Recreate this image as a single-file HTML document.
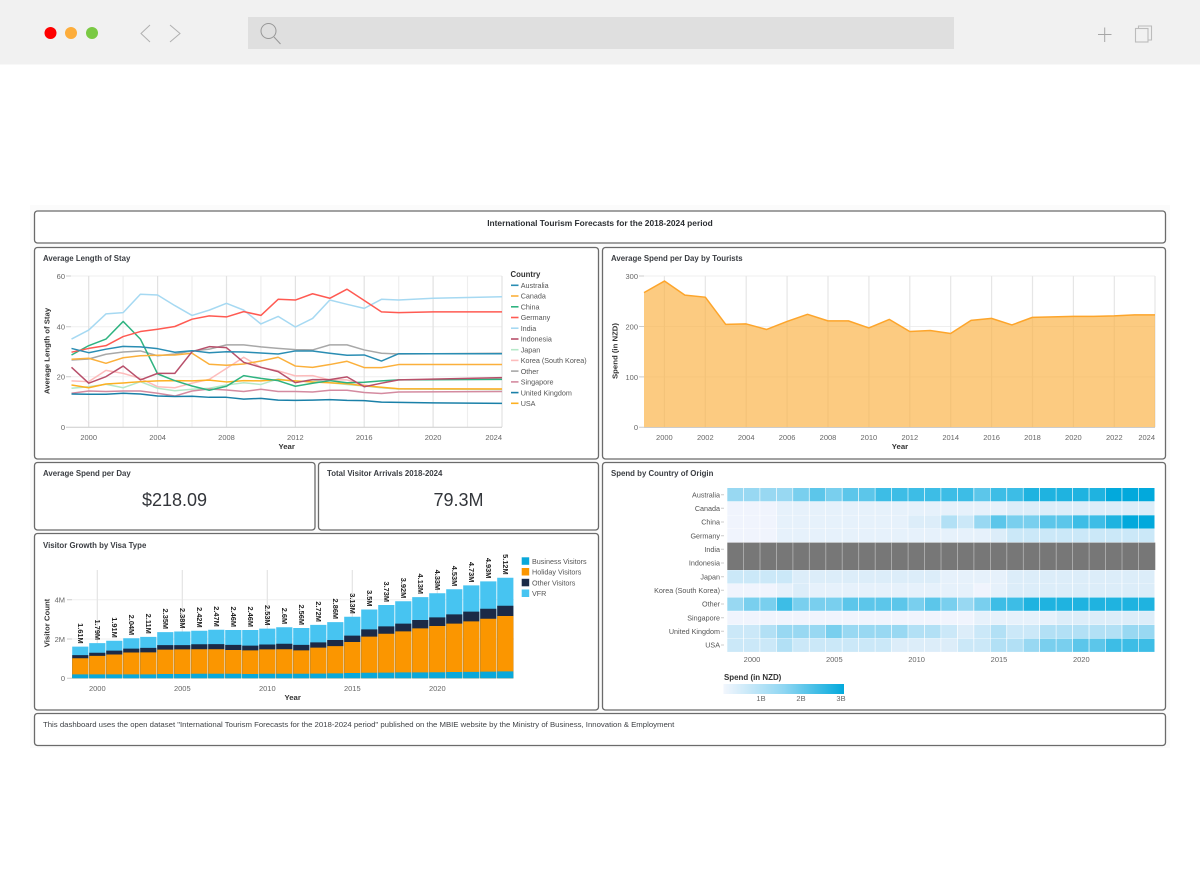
<!DOCTYPE html>
<html lang="en"><head><meta charset="utf-8"><title>International Tourism Forecasts</title>
<style>
html,body{margin:0;padding:0;background:#fff;width:1200px;height:878px;overflow:hidden}
svg{display:block;font-family:"Liberation Sans",sans-serif;filter:blur(.35px)}
.p{fill:#fff;stroke:#6b6b6b;stroke-width:1.3}
.t{font-size:7.85px;font-weight:bold;fill:#3a3d42}
.k{font-size:7.5px;fill:#666}
.e{text-anchor:end}
.m{text-anchor:middle}
.b{font-size:7.75px;font-weight:bold;fill:#333}
.l{font-size:7.2px;fill:#555}
.ln polyline{fill:none;stroke-width:1.5;vector-effect:non-scaling-stroke;stroke-linejoin:round}
.v{font-size:7.4px;font-weight:bold;fill:#222;text-anchor:end;dominant-baseline:central}
.hm rect{width:15.8px;height:13.3px}
.h0{fill:#f0f4fd}.h1{fill:#e6f1fb}.h2{fill:#dcedf9}.h3{fill:#cbe8f8}.h4{fill:#b2e0f5}.h5{fill:#98d8f2}.h6{fill:#79cfee}.h7{fill:#5cc6ea}.h8{fill:#3dbde6}.h9{fill:#1fb3e0}.ha{fill:#02a9dc}
</style></head><body>
<svg width="1200" height="878" viewBox="0 0 1200 878" xmlns="http://www.w3.org/2000/svg">
<defs><linearGradient id="g"><stop offset="0" stop-color="#f2f6fd"/><stop offset=".5" stop-color="#8fd6f2"/><stop offset="1" stop-color="#02a9dc"/></linearGradient></defs>
<rect width="1200" height="64.5" fill="#f1f1f1"/>
<circle cx="50.500" cy="33" r="6" fill="#fe0000"/><circle cx="71" cy="33" r="6" fill="#fdad3b"/><circle cx="92" cy="33" r="6" fill="#7ac943"/>
<path d="M150 25l-9 8.500 9 8.500M170 25l10 8.500-10 8.500" fill="none" stroke="#b0b0b0" stroke-width="1"/>
<rect x="248" y="17" width="706" height="32" fill="#dfdfdf"/>
<circle cx="268.500" cy="31" r="7.500" fill="none" stroke="#979797" stroke-width="1"/><path d="M274 37l6.500 7" stroke="#979797" stroke-width="1"/>
<path d="M1098 34.500h13.500M1104.700 27.500v14.500" stroke="#a6a6a6" stroke-width="1"/>
<path d="M1138.500 28v-2h13v14h-3" fill="none" stroke="#bcbcbc" stroke-width="1.100"/><rect x="1135.500" y="28.500" width="12.500" height="13.500" fill="#f1f1f1" stroke="#bcbcbc" stroke-width="1.100"/>

<rect x="30" y="205" width="1140" height="543" fill="#fbfbfb"/>
<rect class="p" x="34.500" y="211" width="1131" height="32" rx="3"/>
<rect class="p" x="34.500" y="247.500" width="564" height="211.500" rx="3"/>
<rect class="p" x="602.500" y="247.500" width="563" height="211.500" rx="3"/>
<rect class="p" x="34.500" y="462.500" width="280.500" height="67.500" rx="3"/>
<rect class="p" x="318.500" y="462.500" width="280" height="67.500" rx="3"/>
<rect class="p" x="34.500" y="533.500" width="564" height="176.500" rx="3"/>
<rect class="p" x="602.500" y="462.500" width="563" height="247.500" rx="3"/>
<rect class="p" x="34.500" y="713.500" width="1131" height="32" rx="3"/>

<text x="600" y="226" class="m" font-size="8.400" font-weight="bold" fill="#2c2f33">International Tourism Forecasts for the 2018-2024 period</text>
<text class="t" x="43" y="261">Average Length of Stay</text>
<text class="t" x="611" y="261">Average Spend per Day by Tourists</text>
<text class="t" x="43" y="476">Average Spend per Day</text>
<text class="t" x="327" y="476">Total Visitor Arrivals 2018-2024</text>
<text class="t" x="43" y="548">Visitor Growth by Visa Type</text>
<text class="t" x="611" y="476">Spend by Country of Origin</text>
<text x="174.500" y="506" class="m" font-size="18" fill="#33363b">$218.09</text>
<text x="458.500" y="506" class="m" font-size="18" fill="#33363b">79.3M</text>
<text x="43" y="727" font-size="7.780" fill="#3f4246">This dashboard uses the open dataset "International Tourism Forecasts for the 2018-2024 period" published on the MBIE website by the Ministry of Business, Innovation &amp; Employment</text>

<!-- Chart 1 -->
<path d="M71 276H502M71 326.700H502M71 376.700H502" stroke="#efefef" fill="none"/>
<path d="M88.700 276V427M157.600 276V427M226.500 276V427M295.400 276V427M364.200 276V427M433.100 276V427M502 276V427" stroke="#e2e2e2" stroke-width="1.200"/>
<path d="M123.100 276V427M192 276V427M260.900 276V427M329.800 276V427M398.700 276V427M467.500 276V427" stroke="#eeeeee" stroke-width="1.200"/>
<path d="M71 427.300H502M66 276H71M66 326.700H71M66 376.700H71M66 427.300H71" stroke="#ccc"/>
<g class="ln" transform="translate(71.500 427.300) scale(17.220 -2.520)">
<polyline stroke="#a6d9f2" points="0,35 1,38.600 2,45 3,45.500 4,52.800 5,52.500 6,48.300 7,44.400 8,46.500 9,49.200 10,46.500 11,41 12,44 13,39.800 14,43.200 15,50.500 16,48.800 17,47.200 18,50.800 19,50.500 21,51.200 25,51.800"/>
<polyline stroke="#a8a8a8" points="0,26.700 1,27.100 2,29 3,29.900 4,30.300 5,28.400 6,29.100 7,30.300 8,31 9,32.700 10,32.700 11,31.900 12,31.300 13,30.800 14,30.700 15,32.700 16,32.700 17,30.700 18,29.400 19,29.100 25,29.400"/>
<polyline stroke="#fdbcbc" points="0,18.400 1,18.100 2,22.600 3,21.400 4,19.400 5,16.100 6,15.700 7,17.500 8,19 9,23.400 10,27.800 11,23.800 12,22.400 13,20.400 14,20.500 15,18.800 16,18.800 17,16.800 18,15.700 19,15.200 25,15.200"/>
<polyline stroke="#b5e8c8" points="0,15.500 1,16.100 2,17.100 3,15.700 4,18.100 5,15.500 6,14.500 7,15.100 8,15.500 9,16.800 10,17.700 11,17 12,19.200 13,18 14,18.800 15,17.700 16,17 17,16.400 18,15.700 19,15.200 25,15"/>
<polyline stroke="#d48ba0" points="0,13.500 1,14.400 2,14.200 3,14.400 4,14.400 5,13.500 6,12.400 7,14.400 8,15.200 9,14.800 10,14.200 11,15.100 12,14.200 13,14.200 14,14 15,14.700 16,14.700 17,13.800 18,13.400 19,14 25,14.200"/>
<polyline stroke="#fdb022" points="0,16.800 1,15.700 2,17.200 3,17.600 4,18.100 5,18.400 6,18.500 7,18.400 8,18.700 9,18 10,18.500 11,18.400 12,18.900 13,18.400 14,18 15,17.700 16,17.300 17,16.500 18,15.900 19,15.300 25,15.200"/>
<polyline stroke="#2fb380" points="0,28.700 1,32.400 2,35 3,42 4,35 5,21.200 6,18.500 7,16.400 8,14.700 9,16.300 10,20.500 11,19.400 12,18.500 13,16.300 14,17.500 15,18.500 16,17.700 17,17.900 18,18.400 19,18.800 25,19"/>
<polyline stroke="#fbb03b" points="0,27 1,27.400 2,25.400 3,27.600 4,28.400 5,28.600 6,28.700 7,29.400 8,25 9,24.600 10,25.100 11,26.300 12,27.800 13,24.300 14,23.800 15,24.900 16,26.200 17,23.700 18,23.700 19,24.900 25,24.900"/>
<polyline stroke="#b8506b" points="0,23.800 1,17.500 2,20.100 3,24.300 4,18.800 5,21.400 6,21.400 7,30 8,32 9,31.600 10,25.800 11,23.800 12,22.100 13,17.700 14,18.900 15,18.900 16,20 17,16.100 18,17.500 19,18.800 25,19.700"/>
<polyline stroke="#ff5a52" points="0,29.800 1,31.300 2,32.400 3,36 4,38 5,38.900 6,40 7,42.900 8,44.200 9,43.800 10,45.900 11,44.400 12,50.800 13,50.500 14,53 15,51.200 16,54.800 17,50.300 18,45.800 19,45.500 21,45.800 25,45.800"/>
<polyline stroke="#2a8db3" points="0,31.300 1,29.600 2,31 3,32.100 4,31.900 5,31.200 6,29.800 7,30.400 8,29.600 9,30 10,29.900 11,29.500 12,29.100 13,30.300 14,30.300 15,29.400 16,28.600 17,28.700 18,26.300 19,29.200 25,29.200"/>
<polyline stroke="#1a80a8" points="0,13.200 1,13.100 2,13.100 3,13.500 4,13.200 5,12.400 6,12.200 7,12.300 8,11.900 9,11.900 10,11.200 11,11.500 12,10.800 13,10.700 14,10.800 15,11 16,10.700 17,10.600 18,10 19,9.900 21,9.700 25,9.500"/>
</g>
<g class="k"><text class="e" x="65" y="279">60</text><text class="e" x="65" y="329.500">40</text><text class="e" x="65" y="379.500">20</text><text class="e" x="65" y="430">0</text>
<text class="m" x="88.700" y="440">2000</text><text class="m" x="157.600" y="440">2004</text><text class="m" x="226.500" y="440">2008</text><text class="m" x="295.400" y="440">2012</text><text class="m" x="364.200" y="440">2016</text><text class="m" x="433.100" y="440">2020</text><text class="e" x="502" y="440">2024</text></g>
<text class="b m" x="286.700" y="449">Year</text>
<text class="b m" transform="translate(49.500 351) rotate(-90)">Average Length of Stay</text>
<text x="510.500" y="277" font-size="7.800" font-weight="bold" fill="#333">Country</text>
<g fill="none" stroke-width="1.600"><path d="M511 285.300h7.500" stroke="#2a8db3"/><path d="M511 296h7.500" stroke="#fbb03b"/><path d="M511 306.800h7.500" stroke="#2fb380"/><path d="M511 317.500h7.500" stroke="#ff5a52"/><path d="M511 328.200h7.500" stroke="#a6d9f2"/><path d="M511 339h7.500" stroke="#b8506b"/><path d="M511 349.700h7.500" stroke="#b5e8c8"/><path d="M511 360.400h7.500" stroke="#fdbcbc"/><path d="M511 371.100h7.500" stroke="#a8a8a8"/><path d="M511 381.900h7.500" stroke="#d48ba0"/><path d="M511 392.600h7.500" stroke="#1a80a8"/><path d="M511 403.300h7.500" stroke="#fdb022"/></g>
<g class="l"><text x="520.700" y="288">Australia</text><text x="520.700" y="298.700">Canada</text><text x="520.700" y="309.500">China</text><text x="520.700" y="320.200">Germany</text><text x="520.700" y="330.900">India</text><text x="520.700" y="341.700">Indonesia</text><text x="520.700" y="352.400">Japan</text><text x="520.700" y="363.100">Korea (South Korea)</text><text x="520.700" y="373.800">Other</text><text x="520.700" y="384.600">Singapore</text><text x="520.700" y="395.300">United Kingdom</text><text x="520.700" y="406">USA</text></g>

<!-- Chart 2 -->
<path d="M639 276H1155M639 326.500H1155M639 376.900H1155" stroke="#efefef"/>
<path d="M664.400 276V427M705.300 276V427M746.200 276V427M787.100 276V427M828 276V427M868.900 276V427M909.800 276V427M950.700 276V427M991.600 276V427M1032.500 276V427M1073.400 276V427M1114.300 276V427M1155 276V427" stroke="#e6e6e6" stroke-width="1.200"/>
<g transform="translate(644 427.300) scale(20.440 -.5043)">
<polygon fill="#fbb040" fill-opacity=".66" points="0,0 0,267 1,290 2,262 3,258 4,204 5,205 6,194 7,210 8,224 9,211 10,211 11,197 12,214 13,190 14,192 15,186 16,212 17,216 18,203 19,218 20,219 21,220 22,220 23,221 24,223 25,223 25,0"/>
<g class="ln"><polyline stroke="#fda52b" points="0,267 1,290 2,262 3,258 4,204 5,205 6,194 7,210 8,224 9,211 10,211 11,197 12,214 13,190 14,192 15,186 16,212 17,216 18,203 19,218 20,219 21,220 22,220 23,221 24,223 25,223"/></g>
</g>
<path d="M639 276H644M639 326.500H644M639 376.900H644M639 427.300H644M644 427.500H1155" stroke="#ccc"/>
<g class="k"><text class="e" x="638" y="279">300</text><text class="e" x="638" y="329.500">200</text><text class="e" x="638" y="380">100</text><text class="e" x="638" y="430">0</text>
<text class="m" x="664.400" y="440">2000</text><text class="m" x="705.300" y="440">2002</text><text class="m" x="746.200" y="440">2004</text><text class="m" x="787.100" y="440">2006</text><text class="m" x="828" y="440">2008</text><text class="m" x="868.900" y="440">2010</text><text class="m" x="909.800" y="440">2012</text><text class="m" x="950.700" y="440">2014</text><text class="m" x="991.600" y="440">2016</text><text class="m" x="1032.500" y="440">2018</text><text class="m" x="1073.400" y="440">2020</text><text class="m" x="1114.300" y="440">2022</text><text class="e" x="1155" y="440">2024</text></g>
<text class="b m" x="900" y="449">Year</text>
<text class="b m" transform="translate(617.500 351) rotate(-90)">Spend (in NZD)</text>

<!-- Chart 3 -->
<path d="M72 599.700H514M72 639H514" stroke="#efefef"/>
<path d="M97.300 570V678M182.300 570V678M267.300 570V678M352.300 570V678M437.300 570V678" stroke="#e4e4e4" stroke-width="1.200"/>
<path d="M67 599.700h5M67 639h5M67 678.300h5" stroke="#ccc"/>
<g transform="translate(0 678.300) scale(1 -19.650)" fill="none" stroke-width="16.200">
<path stroke="#47c4f1" d="M80.300 0V1.610M97.300 0V1.790M114.300 0V1.910M131.300 0V2.040M148.300 0V2.110M165.300 0V2.350M182.300 0V2.380M199.300 0V2.420M216.300 0V2.470M233.300 0V2.460M250.300 0V2.460M267.300 0V2.530M284.300 0V2.600M301.300 0V2.560M318.300 0V2.720M335.300 0V2.860M352.300 0V3.130M369.300 0V3.500M386.300 0V3.730M403.300 0V3.920M420.300 0V4.130M437.300 0V4.330M454.300 0V4.530M471.300 0V4.730M488.300 0V4.930M505.300 0V5.120"/>
<path stroke="#1b2a47" d="M80.300 0V1.180M97.300 0V1.300M114.300 0V1.410M131.300 0V1.510M148.300 0V1.550M165.300 0V1.690M182.300 0V1.690M199.300 0V1.730M216.300 0V1.740M233.300 0V1.700M250.300 0V1.660M267.300 0V1.720M284.300 0V1.760M301.300 0V1.700M318.300 0V1.830M335.300 0V1.950M352.300 0V2.170M369.300 0V2.490M386.300 0V2.640M403.300 0V2.780M420.300 0V2.970M437.300 0V3.100M454.300 0V3.250M471.300 0V3.390M488.300 0V3.540M505.300 0V3.690"/>
<path stroke="#fb9600" d="M80.300 0V1.020M97.300 0V1.140M114.300 0V1.210M131.300 0V1.310M148.300 0V1.320M165.300 0V1.460M182.300 0V1.470M199.300 0V1.480M216.300 0V1.480M233.300 0V1.440M250.300 0V1.420M267.300 0V1.470M284.300 0V1.480M301.300 0V1.420M318.300 0V1.560M335.300 0V1.640M352.300 0V1.850M369.300 0V2.120M386.300 0V2.270M403.300 0V2.390M420.300 0V2.540M437.300 0V2.660M454.300 0V2.780M471.300 0V2.900M488.300 0V3.030M505.300 0V3.170"/>
<path stroke="#0aa8da" d="M80.300 0V.2M97.300 0V.2M114.300 0V.2M131.300 0V.2M148.300 0V.2M165.300 0V.22M182.300 0V.22M199.300 0V.23M216.300 0V.23M233.300 0V.23M250.300 0V.22M267.300 0V.23M284.300 0V.23M301.300 0V.23M318.300 0V.24M335.300 0V.25M352.300 0V.27M369.300 0V.28M386.300 0V.29M403.300 0V.3M420.300 0V.3M437.300 0V.31M454.300 0V.32M471.300 0V.33M488.300 0V.34M505.300 0V.35"/>
</g>
<g>
<text class="v" transform="translate(80.300 643.700) rotate(90)">1.61M</text><text class="v" transform="translate(97.300 640.100) rotate(90)">1.79M</text><text class="v" transform="translate(114.300 637.800) rotate(90)">1.91M</text><text class="v" transform="translate(131.300 635.200) rotate(90)">2.04M</text><text class="v" transform="translate(148.300 633.800) rotate(90)">2.11M</text><text class="v" transform="translate(165.300 629.100) rotate(90)">2.35M</text><text class="v" transform="translate(182.300 628.500) rotate(90)">2.38M</text><text class="v" transform="translate(199.300 627.700) rotate(90)">2.42M</text><text class="v" transform="translate(216.300 626.800) rotate(90)">2.47M</text><text class="v" transform="translate(233.300 627) rotate(90)">2.46M</text><text class="v" transform="translate(250.300 627) rotate(90)">2.46M</text><text class="v" transform="translate(267.300 625.600) rotate(90)">2.53M</text><text class="v" transform="translate(284.300 624.200) rotate(90)">2.6M</text><text class="v" transform="translate(301.300 625) rotate(90)">2.56M</text><text class="v" transform="translate(318.300 621.900) rotate(90)">2.72M</text><text class="v" transform="translate(335.300 619.100) rotate(90)">2.86M</text><text class="v" transform="translate(352.300 613.800) rotate(90)">3.13M</text><text class="v" transform="translate(369.300 606.500) rotate(90)">3.5M</text><text class="v" transform="translate(386.300 602) rotate(90)">3.73M</text><text class="v" transform="translate(403.300 598.300) rotate(90)">3.92M</text><text class="v" transform="translate(420.300 594.100) rotate(90)">4.13M</text><text class="v" transform="translate(437.300 590.200) rotate(90)">4.33M</text><text class="v" transform="translate(454.300 586.300) rotate(90)">4.53M</text><text class="v" transform="translate(471.300 582.400) rotate(90)">4.73M</text><text class="v" transform="translate(488.300 578.400) rotate(90)">4.93M</text><text class="v" transform="translate(505.300 574.700) rotate(90)">5.12M</text>
</g>
<g class="k"><text class="e" x="65" y="602.500">4M</text><text class="e" x="65" y="642">2M</text><text class="e" x="65" y="681">0</text>
<text class="m" x="97.300" y="691">2000</text><text class="m" x="182.300" y="691">2005</text><text class="m" x="267.300" y="691">2010</text><text class="m" x="352.300" y="691">2015</text><text class="m" x="437.300" y="691">2020</text></g>
<text class="b m" x="292.700" y="700">Year</text>
<text class="b m" transform="translate(49.500 623) rotate(-90)">Visitor Count</text>
<rect x="521.700" y="557.300" width="7.500" height="7.500" fill="#0aa8da"/><rect x="521.700" y="568" width="7.500" height="7.500" fill="#fb9600"/><rect x="521.700" y="578.800" width="7.500" height="7.500" fill="#1b2a47"/><rect x="521.700" y="589.500" width="7.500" height="7.500" fill="#47c4f1"/>
<g class="l"><text x="532" y="564">Business Visitors</text><text x="532" y="574.700">Holiday Visitors</text><text x="532" y="585.500">Other Visitors</text><text x="532" y="596.200">VFR</text></g>

<!-- Heatmap -->
<g class="hm">
<g transform="translate(0 488)"><rect x="727.300" class="h5"/><rect x="743.800" class="h5"/><rect x="760.200" class="h5"/><rect x="776.700" class="h5"/><rect x="793.100" class="h6"/><rect x="809.600" class="h7"/><rect x="826" class="h6"/><rect x="842.500" class="h7"/><rect x="859" class="h7"/><rect x="875.400" class="h8"/><rect x="891.900" class="h8"/><rect x="908.300" class="h8"/><rect x="924.800" class="h8"/><rect x="941.200" class="h8"/><rect x="957.700" class="h8"/><rect x="974.200" class="h7"/><rect x="990.600" class="h8"/><rect x="1007.100" class="h8"/><rect x="1023.500" class="h9"/><rect x="1040" class="h9"/><rect x="1056.400" class="h9"/><rect x="1072.900" class="h9"/><rect x="1089.400" class="h9"/><rect x="1105.800" class="ha"/><rect x="1122.300" class="ha"/><rect x="1138.700" class="ha"/></g>
<g transform="translate(0 501.700)"><rect x="727.300" class="h0"/><rect x="743.800" class="h0"/><rect x="760.200" class="h0"/><rect x="776.700" class="h1"/><rect x="793.100" class="h1"/><rect x="809.600" class="h1"/><rect x="826" class="h1"/><rect x="842.500" class="h1"/><rect x="859" class="h1"/><rect x="875.400" class="h1"/><rect x="891.900" class="h1"/><rect x="908.300" class="h1"/><rect x="924.800" class="h1"/><rect x="941.200" class="h1"/><rect x="957.700" class="h1"/><rect x="974.200" class="h1"/><rect x="990.600" class="h1"/><rect x="1007.100" class="h2"/><rect x="1023.500" class="h2"/><rect x="1040" class="h2"/><rect x="1056.400" class="h2"/><rect x="1072.900" class="h2"/><rect x="1089.400" class="h2"/><rect x="1105.800" class="h2"/><rect x="1122.300" class="h2"/><rect x="1138.700" class="h2"/></g>
<g transform="translate(0 515.300)"><rect x="727.300" class="h0"/><rect x="743.800" class="h0"/><rect x="760.200" class="h0"/><rect x="776.700" class="h1"/><rect x="793.100" class="h1"/><rect x="809.600" class="h1"/><rect x="826" class="h1"/><rect x="842.500" class="h1"/><rect x="859" class="h1"/><rect x="875.400" class="h1"/><rect x="891.900" class="h1"/><rect x="908.300" class="h2"/><rect x="924.800" class="h2"/><rect x="941.200" class="h4"/><rect x="957.700" class="h3"/><rect x="974.200" class="h5"/><rect x="990.600" class="h7"/><rect x="1007.100" class="h6"/><rect x="1023.500" class="h6"/><rect x="1040" class="h7"/><rect x="1056.400" class="h7"/><rect x="1072.900" class="h8"/><rect x="1089.400" class="h8"/><rect x="1105.800" class="h9"/><rect x="1122.300" class="ha"/><rect x="1138.700" class="ha"/></g>
<g transform="translate(0 529)"><rect x="727.300" class="h0"/><rect x="743.800" class="h0"/><rect x="760.200" class="h0"/><rect x="776.700" class="h1"/><rect x="793.100" class="h1"/><rect x="809.600" class="h1"/><rect x="826" class="h1"/><rect x="842.500" class="h1"/><rect x="859" class="h1"/><rect x="875.400" class="h1"/><rect x="891.900" class="h1"/><rect x="908.300" class="h1"/><rect x="924.800" class="h1"/><rect x="941.200" class="h1"/><rect x="957.700" class="h1"/><rect x="974.200" class="h1"/><rect x="990.600" class="h2"/><rect x="1007.100" class="h3"/><rect x="1023.500" class="h3"/><rect x="1040" class="h3"/><rect x="1056.400" class="h3"/><rect x="1072.900" class="h3"/><rect x="1089.400" class="h3"/><rect x="1105.800" class="h3"/><rect x="1122.300" class="h3"/><rect x="1138.700" class="h3"/></g>
</g>
<rect x="727.300" y="542.600" width="428" height="27.400" fill="#777"/>
<path d="M743.500 542.600V570M760 542.600V570M776.400 542.600V570M792.900 542.600V570M809.300 542.600V570M825.800 542.600V570M842.200 542.600V570M858.700 542.600V570M875.200 542.600V570M891.600 542.600V570M908.100 542.600V570M924.500 542.600V570M941 542.600V570M957.400 542.600V570M973.900 542.600V570M990.400 542.600V570M1006.800 542.600V570M1023.300 542.600V570M1039.700 542.600V570M1056.200 542.600V570M1072.600 542.600V570M1089.100 542.600V570M1105.600 542.600V570M1122 542.600V570M1138.500 542.600V570" stroke="#b4b4b4" stroke-width=".8"/>
<g class="hm">
<g transform="translate(0 570.200)"><rect x="727.300" class="h3"/><rect x="743.800" class="h3"/><rect x="760.200" class="h3"/><rect x="776.700" class="h3"/><rect x="793.100" class="h2"/><rect x="809.600" class="h2"/><rect x="826" class="h2"/><rect x="842.500" class="h2"/><rect x="859" class="h2"/><rect x="875.400" class="h2"/><rect x="891.900" class="h2"/><rect x="908.300" class="h2"/><rect x="924.800" class="h2"/><rect x="941.200" class="h1"/><rect x="957.700" class="h1"/><rect x="974.200" class="h1"/><rect x="990.600" class="h1"/><rect x="1007.100" class="h2"/><rect x="1023.500" class="h2"/><rect x="1040" class="h2"/><rect x="1056.400" class="h2"/><rect x="1072.900" class="h2"/><rect x="1089.400" class="h2"/><rect x="1105.800" class="h2"/><rect x="1122.300" class="h2"/><rect x="1138.700" class="h2"/></g>
<g transform="translate(0 583.800)"><rect x="727.300" class="h0"/><rect x="743.800" class="h0"/><rect x="760.200" class="h0"/><rect x="776.700" class="h1"/><rect x="793.100" class="h2"/><rect x="809.600" class="h1"/><rect x="826" class="h1"/><rect x="842.500" class="h1"/><rect x="859" class="h1"/><rect x="875.400" class="h1"/><rect x="891.900" class="h1"/><rect x="908.300" class="h1"/><rect x="924.800" class="h1"/><rect x="941.200" class="h1"/><rect x="957.700" class="h1"/><rect x="974.200" class="h0"/><rect x="990.600" class="h1"/><rect x="1007.100" class="h2"/><rect x="1023.500" class="h2"/><rect x="1040" class="h2"/><rect x="1056.400" class="h2"/><rect x="1072.900" class="h2"/><rect x="1089.400" class="h2"/><rect x="1105.800" class="h2"/><rect x="1122.300" class="h2"/><rect x="1138.700" class="h2"/></g>
<g transform="translate(0 597.500)"><rect x="727.300" class="h5"/><rect x="743.800" class="h6"/><rect x="760.200" class="h6"/><rect x="776.700" class="h8"/><rect x="793.100" class="h6"/><rect x="809.600" class="h6"/><rect x="826" class="h6"/><rect x="842.500" class="h7"/><rect x="859" class="h7"/><rect x="875.400" class="h7"/><rect x="891.900" class="h7"/><rect x="908.300" class="h6"/><rect x="924.800" class="h7"/><rect x="941.200" class="h6"/><rect x="957.700" class="h5"/><rect x="974.200" class="h6"/><rect x="990.600" class="h8"/><rect x="1007.100" class="h8"/><rect x="1023.500" class="h9"/><rect x="1040" class="h9"/><rect x="1056.400" class="h9"/><rect x="1072.900" class="h9"/><rect x="1089.400" class="h9"/><rect x="1105.800" class="h9"/><rect x="1122.300" class="h9"/><rect x="1138.700" class="h9"/></g>
<g transform="translate(0 611.200)"><rect x="727.300" class="h0"/><rect x="743.800" class="h0"/><rect x="760.200" class="h0"/><rect x="776.700" class="h0"/><rect x="793.100" class="h0"/><rect x="809.600" class="h0"/><rect x="826" class="h0"/><rect x="842.500" class="h0"/><rect x="859" class="h0"/><rect x="875.400" class="h0"/><rect x="891.900" class="h0"/><rect x="908.300" class="h0"/><rect x="924.800" class="h0"/><rect x="941.200" class="h0"/><rect x="957.700" class="h0"/><rect x="974.200" class="h1"/><rect x="990.600" class="h1"/><rect x="1007.100" class="h1"/><rect x="1023.500" class="h1"/><rect x="1040" class="h1"/><rect x="1056.400" class="h2"/><rect x="1072.900" class="h2"/><rect x="1089.400" class="h2"/><rect x="1105.800" class="h2"/><rect x="1122.300" class="h2"/><rect x="1138.700" class="h2"/></g>
<g transform="translate(0 624.900)"><rect x="727.300" class="h3"/><rect x="743.800" class="h3"/><rect x="760.200" class="h4"/><rect x="776.700" class="h5"/><rect x="793.100" class="h5"/><rect x="809.600" class="h5"/><rect x="826" class="h6"/><rect x="842.500" class="h5"/><rect x="859" class="h5"/><rect x="875.400" class="h5"/><rect x="891.900" class="h5"/><rect x="908.300" class="h4"/><rect x="924.800" class="h4"/><rect x="941.200" class="h3"/><rect x="957.700" class="h2"/><rect x="974.200" class="h3"/><rect x="990.600" class="h4"/><rect x="1007.100" class="h3"/><rect x="1023.500" class="h3"/><rect x="1040" class="h4"/><rect x="1056.400" class="h4"/><rect x="1072.900" class="h4"/><rect x="1089.400" class="h4"/><rect x="1105.800" class="h4"/><rect x="1122.300" class="h5"/><rect x="1138.700" class="h5"/></g>
<g transform="translate(0 638.600)"><rect x="727.300" class="h3"/><rect x="743.800" class="h3"/><rect x="760.200" class="h3"/><rect x="776.700" class="h4"/><rect x="793.100" class="h3"/><rect x="809.600" class="h3"/><rect x="826" class="h3"/><rect x="842.500" class="h3"/><rect x="859" class="h3"/><rect x="875.400" class="h3"/><rect x="891.900" class="h2"/><rect x="908.300" class="h2"/><rect x="924.800" class="h2"/><rect x="941.200" class="h2"/><rect x="957.700" class="h3"/><rect x="974.200" class="h3"/><rect x="990.600" class="h4"/><rect x="1007.100" class="h4"/><rect x="1023.500" class="h5"/><rect x="1040" class="h6"/><rect x="1056.400" class="h6"/><rect x="1072.900" class="h7"/><rect x="1089.400" class="h7"/><rect x="1105.800" class="h8"/><rect x="1122.300" class="h8"/><rect x="1138.700" class="h8"/></g>
</g>
<path d="M721 494.700h3M721 508.300h3M721 522h3M721 535.700h3M721 549.300h3M721 563h3M721 576.700h3M721 590.300h3M721 604h3M721 617.700h3M721 631.300h3M721 645h3" stroke="#ccc"/>
<g class="l">
<text class="e" x="720" y="497.500">Australia</text><text class="e" x="720" y="511">Canada</text><text class="e" x="720" y="524.700">China</text><text class="e" x="720" y="538.500">Germany</text><text class="e" x="720" y="552">India</text><text class="e" x="720" y="565.700">Indonesia</text><text class="e" x="720" y="579.500">Japan</text><text class="e" x="720" y="593">Korea (South Korea)</text><text class="e" x="720" y="606.700">Other</text><text class="e" x="720" y="620.500">Singapore</text><text class="e" x="720" y="634">United Kingdom</text><text class="e" x="720" y="647.700">USA</text>
</g>
<g class="k"><text class="m" x="752" y="662">2000</text><text class="m" x="834.300" y="662">2005</text><text class="m" x="916.600" y="662">2010</text><text class="m" x="999" y="662">2015</text><text class="m" x="1081.300" y="662">2020</text></g>
<text class="b" x="724" y="680" font-size="7.950" style="font-size:7.95px">Spend (in NZD)</text>
<rect x="723.500" y="684" width="120.500" height="10" fill="url(#g)"/>
<g class="k"><text class="m" x="761" y="701">1B</text><text class="m" x="801" y="701">2B</text><text class="m" x="841" y="701">3B</text></g>
</svg>
</body></html>
